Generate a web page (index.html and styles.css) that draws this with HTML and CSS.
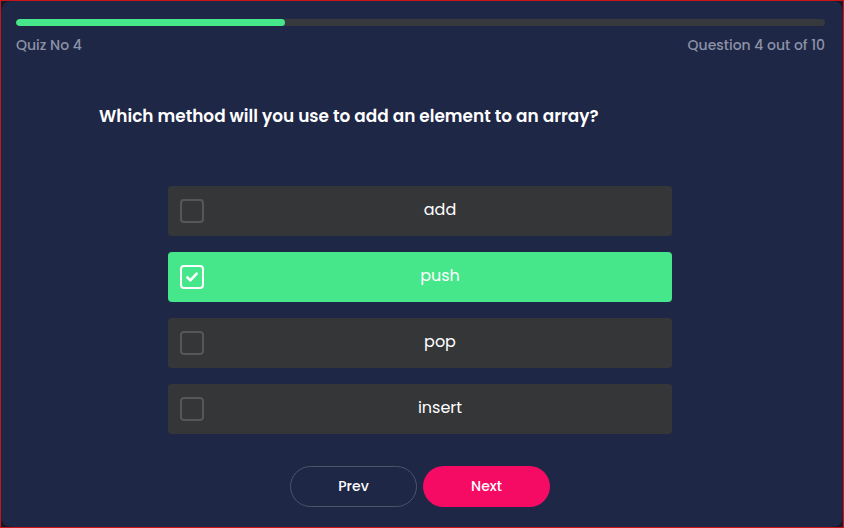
FILE: index.html
```html
<!DOCTYPE html>
<html>
<head>
<meta charset="utf-8">
<link rel="stylesheet" href="styles.css">
</head>
<body>
<div class="frame">
  <div class="card">
    <div class="progress"><div class="progress-fill" style="width: 33.3%"></div></div>
    <div class="meta">
      <span>Quiz No 4</span>
      <span>Question 4 out of 10</span>
    </div>
    <h1 class="question">Which method will you use to add an element to an array?</h1>
    <div class="options">
      <div class="option"><span class="box"></span><span class="label">add</span></div>
      <div class="option selected"><span class="box"><svg viewBox="0 0 24 24" width="16" height="16"><path d="M5 12.5l4.5 4.5L19 7" fill="none" stroke="#fff" stroke-width="4" stroke-linecap="round" stroke-linejoin="round"/></svg></span><span class="label">push</span></div>
      <div class="option"><span class="box"></span><span class="label">pop</span></div>
      <div class="option"><span class="box"></span><span class="label">insert</span></div>
    </div>
    <div class="actions">
      <button class="btn prev">Prev</button>
      <button class="btn next">Next</button>
    </div>
  </div>
</div>
</body>
</html>
```

FILE: styles.css
```css
* { box-sizing: border-box; }
html, body { margin: 0; padding: 0; }
body {
  width: 844px;
  height: 528px;
  font-family: "Poppins", "Lato", "Noto Sans", sans-serif;
  background: #111;
}
.frame {
  width: 844px;
  height: 528px;
  border: 1px solid #c8151c;
  background: #141a2c;
}
.card {
  height: 100%;
  background: #1f2747;
  border-radius: 10px;
  padding: 18px 18px 0 15px;
  display: flex;
  flex-direction: column;
}
.progress {
  height: 7px;
  background: #363a3c;
  border-radius: 4px;
  overflow: hidden;
}
.progress-fill {
  height: 100%;
  background: #46e68a;
  border-radius: 4px;
}
.meta {
  display: flex;
  justify-content: space-between;
  margin-top: 9px;
  font-size: 14px;
  font-weight: 500;
  color: #8c92a6;
  line-height: 20px;
}
.question {
  margin: 49px 0 0 83px;
  font-size: 16.9px;
  font-weight: 600;
  color: #ffffff;
  line-height: 24px;
}
.options {
  margin: 58px 0 0 152px;
  width: 504px;
  display: flex;
  flex-direction: column;
  gap: 16px;
}
.option {
  height: 50px;
  background: #343638;
  border-radius: 4px;
  display: flex;
  align-items: center;
  padding-left: 12px;
}
.option.selected { background: #46e68a; }
.box {
  width: 24px;
  height: 24px;
  border: 2px solid #55585a;
  border-radius: 4px;
  display: flex;
  align-items: center;
  justify-content: center;
}
.option.selected .box { border-color: #ffffff; }
.label {
  flex: 1;
  text-align: center;
  color: #ffffff;
  font-size: 16px;
  padding-left: 4px;
  margin-top: -4px;
}
.actions {
  margin: 32px 0 0 274px;
  display: flex;
  gap: 6px;
}
.btn {
  width: 127px;
  height: 41px;
  border-radius: 21px;
  font-family: inherit;
  font-size: 14px;
  font-weight: 500;
  color: #ffffff;
  cursor: pointer;
}
.prev {
  background: transparent;
  border: 1px solid #4d5466;
}
.next {
  background: #f50a64;
  border: none;
}
```
